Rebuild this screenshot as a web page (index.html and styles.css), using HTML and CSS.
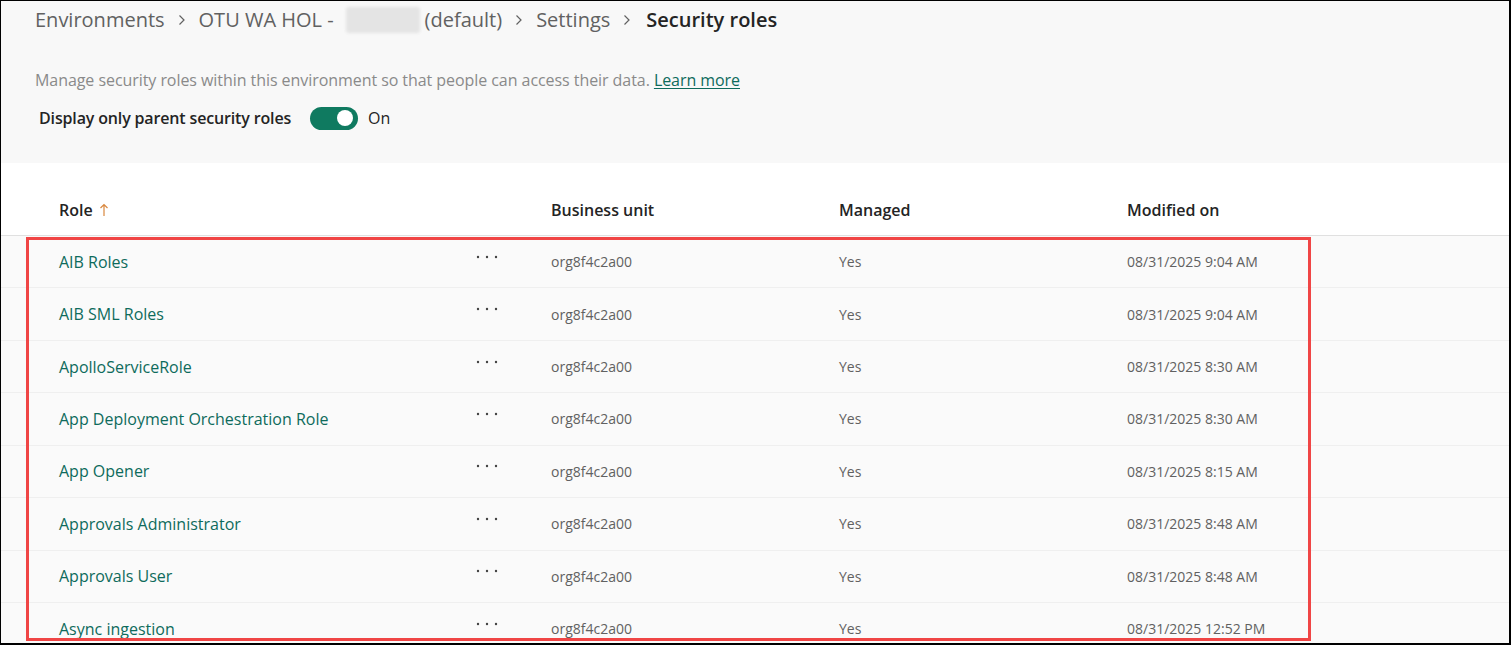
FILE: index.html
```html
<!DOCTYPE html>
<html lang="en">
<head>
<meta charset="utf-8">
<title>Security roles</title>
<link rel="stylesheet" href="styles.css">
</head>
<body>
<div class="frame">
  <section class="top">
    <nav class="crumbs">
      <span class="crumb">Environments</span>
      <svg class="chev" viewBox="0 0 8 12" width="8" height="12"><polyline points="1.5,1.5 6,6 1.5,10.5" fill="none" stroke="#616161" stroke-width="1.2"/></svg>
      <span class="crumb">OTU WA HOL -</span>
      <span class="blur"></span>
      <span class="crumb">(default)</span>
      <svg class="chev" viewBox="0 0 8 12" width="8" height="12"><polyline points="1.5,1.5 6,6 1.5,10.5" fill="none" stroke="#616161" stroke-width="1.2"/></svg>
      <span class="crumb">Settings</span>
      <svg class="chev" viewBox="0 0 8 12" width="8" height="12"><polyline points="1.5,1.5 6,6 1.5,10.5" fill="none" stroke="#616161" stroke-width="1.2"/></svg>
      <span class="crumb current">Security roles</span>
    </nav>
    <p class="desc">Manage security roles within this environment so that people can access their data. <a class="learn" href="#">Learn more</a></p>
    <div class="toggle-row">
      <span class="toggle-label">Display only parent security roles</span>
      <span class="switch"><span class="knob"></span></span>
      <span class="on">On</span>
    </div>
  </section>

  <section class="grid">
    <div class="row head">
      <div class="cell">Role <svg class="sort" viewBox="0 0 10 14" width="10" height="14"><path d="M5 13V1.5M1.5 5L5 1.5L8.5 5" fill="none" stroke="#d9883f" stroke-width="1.2"/></svg></div>
      <div class="cell"></div>
      <div class="cell">Business unit</div>
      <div class="cell">Managed</div>
      <div class="cell">Modified on</div>
    </div>

    <div class="row">
      <div class="cell name">AIB Roles</div>
      <div class="cell more"><svg viewBox="0 0 22 4" width="22" height="4"><circle cx="2" cy="2" r="1.2"/><circle cx="11" cy="2" r="1.2"/><circle cx="20" cy="2" r="1.2"/></svg></div>
      <div class="cell small">org8f4c2a00</div>
      <div class="cell small">Yes</div>
      <div class="cell small">08/31/2025 9:04 AM</div>
    </div>
    <div class="row">
      <div class="cell name">AIB SML Roles</div>
      <div class="cell more"><svg viewBox="0 0 22 4" width="22" height="4"><circle cx="2" cy="2" r="1.2"/><circle cx="11" cy="2" r="1.2"/><circle cx="20" cy="2" r="1.2"/></svg></div>
      <div class="cell small">org8f4c2a00</div>
      <div class="cell small">Yes</div>
      <div class="cell small">08/31/2025 9:04 AM</div>
    </div>
    <div class="row">
      <div class="cell name">ApolloServiceRole</div>
      <div class="cell more"><svg viewBox="0 0 22 4" width="22" height="4"><circle cx="2" cy="2" r="1.2"/><circle cx="11" cy="2" r="1.2"/><circle cx="20" cy="2" r="1.2"/></svg></div>
      <div class="cell small">org8f4c2a00</div>
      <div class="cell small">Yes</div>
      <div class="cell small">08/31/2025 8:30 AM</div>
    </div>
    <div class="row">
      <div class="cell name">App Deployment Orchestration Role</div>
      <div class="cell more"><svg viewBox="0 0 22 4" width="22" height="4"><circle cx="2" cy="2" r="1.2"/><circle cx="11" cy="2" r="1.2"/><circle cx="20" cy="2" r="1.2"/></svg></div>
      <div class="cell small">org8f4c2a00</div>
      <div class="cell small">Yes</div>
      <div class="cell small">08/31/2025 8:30 AM</div>
    </div>
    <div class="row">
      <div class="cell name">App Opener</div>
      <div class="cell more"><svg viewBox="0 0 22 4" width="22" height="4"><circle cx="2" cy="2" r="1.2"/><circle cx="11" cy="2" r="1.2"/><circle cx="20" cy="2" r="1.2"/></svg></div>
      <div class="cell small">org8f4c2a00</div>
      <div class="cell small">Yes</div>
      <div class="cell small">08/31/2025 8:15 AM</div>
    </div>
    <div class="row">
      <div class="cell name">Approvals Administrator</div>
      <div class="cell more"><svg viewBox="0 0 22 4" width="22" height="4"><circle cx="2" cy="2" r="1.2"/><circle cx="11" cy="2" r="1.2"/><circle cx="20" cy="2" r="1.2"/></svg></div>
      <div class="cell small">org8f4c2a00</div>
      <div class="cell small">Yes</div>
      <div class="cell small">08/31/2025 8:48 AM</div>
    </div>
    <div class="row">
      <div class="cell name">Approvals User</div>
      <div class="cell more"><svg viewBox="0 0 22 4" width="22" height="4"><circle cx="2" cy="2" r="1.2"/><circle cx="11" cy="2" r="1.2"/><circle cx="20" cy="2" r="1.2"/></svg></div>
      <div class="cell small">org8f4c2a00</div>
      <div class="cell small">Yes</div>
      <div class="cell small">08/31/2025 8:48 AM</div>
    </div>
    <div class="row">
      <div class="cell name">Async ingestion</div>
      <div class="cell more"><svg viewBox="0 0 22 4" width="22" height="4"><circle cx="2" cy="2" r="1.2"/><circle cx="11" cy="2" r="1.2"/><circle cx="20" cy="2" r="1.2"/></svg></div>
      <div class="cell small">org8f4c2a00</div>
      <div class="cell small">Yes</div>
      <div class="cell small">08/31/2025 12:52 PM</div>
    </div>
  </section>

  <div class="highlight"></div>
</div>
</body>
</html>
```

FILE: styles.css
```css
html, body {
  margin: 0;
  padding: 0;
  background: #ffffff;
}

body {
  font-family: "Open Sans", "Noto Sans", "Liberation Sans", sans-serif;
  color: #242424;
}

.frame {
  position: relative;
  width: 1511px;
  height: 645px;
  box-sizing: border-box;
  border-style: solid;
  border-color: #000;
  border-width: 1px 2px 2px 1px;
  overflow: hidden;
  background: #fafafa;
}

.top {
  background: #f8f8f8;
  padding: 5px 0 33px 34px;
}

.crumbs {
  display: flex;
  align-items: center;
  height: 28px;
  font-size: 20px;
  line-height: 28px;
  color: #616161;
}

.crumb {
  white-space: nowrap;
}

.crumb.current {
  color: #242424;
  font-weight: 600;
}

.chev {
  margin: 0 13px 0 13px;
  flex: none;
}

.chev:last-of-type {
  margin-right: 15px;
}

.blur {
  display: inline-block;
  width: 74px;
  height: 26px;
  margin: 0 5px 0 12px;
  background: #e4e4e4;
  border-radius: 3px;
  filter: blur(1.5px);
}

.desc {
  margin: 36px 0 0 0;
  font-size: 16px;
  line-height: 20px;
  letter-spacing: -0.06px;
  color: #8a8a8a;
}

.learn {
  color: #0e6b5c;
  text-decoration: underline;
  text-underline-offset: 2px;
}

.toggle-row {
  display: flex;
  align-items: center;
  height: 24px;
  margin: 16px 0 0 4px;
}

.toggle-label {
  font-size: 16px;
  font-weight: 600;
  letter-spacing: -0.15px;
  color: #242424;
}

.switch {
  position: relative;
  display: inline-block;
  width: 48px;
  height: 23px;
  margin-left: 19px;
  border-radius: 12px;
  background: #0f7a60;
}

.knob {
  position: absolute;
  right: 5px;
  top: 3.5px;
  width: 16px;
  height: 16px;
  border-radius: 50%;
  background: #ffffff;
}

.on {
  margin-left: 10px;
  font-size: 16px;
  color: #242424;
}

.grid {
  display: flex;
  flex-direction: column;
}

.row {
  display: grid;
  grid-template-columns: 415px 77px 288px 288px 1fr;
  align-items: center;
  box-sizing: border-box;
  height: 52.43px;
  padding-left: 58px;
  border-bottom: 1px solid #efefef;
  background: #fafafa;
}

.row.head {
  height: 73px;
  align-items: end;
  padding-bottom: 14px;
  background: #ffffff;
  border-bottom: 1px solid #e0e0e0;
  font-size: 16px;
  font-weight: 600;
  line-height: 22px;
  color: #242424;
}

.sort {
  vertical-align: -1px;
  margin-left: 2px;
}

.cell {
  white-space: nowrap;
}

.name {
  font-size: 16px;
  color: #0e6b5c;
}

.more {
  display: flex;
  align-items: center;
  padding-left: 2px;
  margin-top: -10px;
}

.more svg {
  fill: #424242;
}

.small {
  font-size: 14px;
  color: #616161;
}

.highlight {
  position: absolute;
  left: 25px;
  top: 236px;
  width: 1285px;
  height: 404px;
  box-sizing: border-box;
  border: 3px solid #f04545;
  pointer-events: none;
}
```
